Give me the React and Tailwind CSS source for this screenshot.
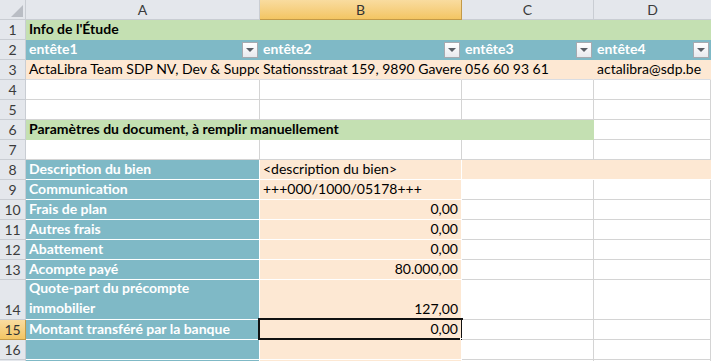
import React from "react"

const GREEN = "bg-[#c4e0b2]"
const TEAL = "bg-[#7fb9c6]"
const PEACH = "bg-[#fde8d3]"

function Dropdown() {
  return (
    <div className="absolute right-[1px] top-[2px] flex h-[16px] w-[16px] items-center justify-center border border-[#a6aab0] bg-gradient-to-b from-white to-[#e8eaee]">
      <svg width="8" height="5" viewBox="0 0 8 5">
        <path d="M0 0 L8 0 L4 4 Z" fill="#5a5f66" />
      </svg>
    </div>
  )
}

function Cell({ w, bg = "bg-white", border = "border-[#d4d4d4]", children, className = "", drop }) {
  return (
    <div
      className={`relative shrink-0 self-stretch border-r border-b ${bg} ${border} ${className}`}
      style={w ? { width: w } : { flex: 1 }}
    >
      {children}
      {drop && <Dropdown />}
    </div>
  )
}

function RowHead({ n, h = 20, selected }) {
  return (
    <div
      className={`flex w-[26px] shrink-0 items-end justify-center border-r border-b pb-[1px] text-[14px] leading-[16px] ${
        selected
          ? "border-[#c39a48] bg-gradient-to-b from-[#f9dc9f] to-[#f3c562] text-[#333]"
          : "border-[#c9cdd3] bg-[#e4e7ec] text-[#3b3b3b]"
      }`}
      style={{ height: h }}
    >
      {n}
    </div>
  )
}

function Row({ n, h = 20, selected, children }) {
  return (
    <div className="flex" style={{ height: h }}>
      <RowHead n={n} h={h} selected={selected} />
      {children}
    </div>
  )
}

const W = { A: 234, B: 202, C: 132 }

function Txt({ children, bold, white, right, className = "" }) {
  return (
    <div
      className={`absolute bottom-[1px] whitespace-nowrap text-[14px] leading-[18px] ${bold ? "font-bold" : ""} ${
        white ? "text-white" : "text-black"
      } ${right ? "right-[3px]" : "left-[3px]"} ${className}`}
    >
      {children}
    </div>
  )
}

export default function App() {
  return (
    <div
      className="h-[361px] w-[711px] overflow-hidden bg-white"
      style={{ fontFamily: "Lato, 'Open Sans', sans-serif" }}
    >
      {/* column headers */}
      <div className="flex h-[20px]">
        <div className="relative w-[26px] shrink-0 border-r border-b border-[#c9cdd3] bg-[#e4e7ec]">
          <svg className="absolute right-[2px] bottom-[2px]" width="12" height="12" viewBox="0 0 12 12">
            <path d="M12 0 L12 12 L0 12 Z" fill="#b9bdc4" />
          </svg>
        </div>
        <div className="flex w-[234px] shrink-0 items-center justify-center border-r border-b border-[#c9cdd3] bg-[#e4e7ec] text-[14px] text-[#3b3b3b]">
          A
        </div>
        <div className="flex w-[202px] shrink-0 items-center justify-center border-r border-b border-[#c39a48] bg-gradient-to-b from-[#f9dc9f] to-[#f3c562] text-[14px] text-[#333]">
          B
        </div>
        <div className="flex w-[132px] shrink-0 items-center justify-center border-r border-b border-[#c9cdd3] bg-[#e4e7ec] text-[14px] text-[#3b3b3b]">
          C
        </div>
        <div className="flex flex-1 items-center justify-center border-b border-[#c9cdd3] bg-[#e4e7ec] text-[14px] text-[#3b3b3b]">
          D
        </div>
      </div>

      {/* row 1 */}
      <Row n={1}>
        <div className={`relative flex-1 border-b border-[#c4e0b2] ${GREEN}`}>
          <Txt bold>Info de l'Étude</Txt>
        </div>
      </Row>

      {/* row 2 */}
      <Row n={2}>
        <Cell w={W.A} bg={TEAL} border="border-[#7fb9c6]" drop>
          <Txt bold white>entête1</Txt>
        </Cell>
        <Cell w={W.B} bg={TEAL} border="border-[#7fb9c6]" drop>
          <Txt bold white>entête2</Txt>
        </Cell>
        <Cell w={W.C} bg={TEAL} border="border-[#7fb9c6]" drop>
          <Txt bold white>entête3</Txt>
        </Cell>
        <Cell bg={TEAL} border="border-[#7fb9c6]" drop>
          <Txt bold white>entête4</Txt>
        </Cell>
      </Row>

      {/* row 3 */}
      <Row n={3}>
        <Cell w={W.A} bg={PEACH} border="border-[#fde8d3] border-b-[#d9dde3]" className="overflow-hidden">
          <Txt>ActaLibra Team SDP NV, Dev &amp; Support</Txt>
        </Cell>
        <Cell w={W.B} bg={PEACH} border="border-[#fde8d3] border-b-[#d9dde3]">
          <Txt>Stationsstraat 159, 9890 Gavere</Txt>
        </Cell>
        <Cell w={W.C} bg={PEACH} border="border-[#fde8d3] border-b-[#d9dde3]">
          <Txt>056 60 93 61</Txt>
        </Cell>
        <Cell bg={PEACH} border="border-[#fde8d3] border-b-[#d9dde3]">
          <Txt>actalibra@sdp.be</Txt>
        </Cell>
      </Row>

      {/* rows 4-5 */}
      {[4, 5].map((n) => (
        <Row key={n} n={n}>
          <Cell w={W.A} />
          <Cell w={W.B} />
          <Cell w={W.C} />
          <Cell />
        </Row>
      ))}

      {/* row 6 */}
      <Row n={6}>
        <div className={`relative w-[568px] shrink-0 border-r border-b border-[#c4e0b2] ${GREEN}`}>
          <Txt bold>Paramètres du document, à remplir manuellement</Txt>
        </div>
        <Cell />
      </Row>

      {/* row 7 */}
      <Row n={7}>
        <Cell w={W.A} />
        <Cell w={W.B} />
        <Cell w={W.C} />
        <Cell />
      </Row>

      {/* row 8 */}
      <Row n={8}>
        <Cell w={W.A} bg={TEAL} border="border-white">
          <Txt bold white>Description du bien</Txt>
        </Cell>
        <Cell w={W.B} bg={PEACH} border="border-white">
          <Txt>&lt;description du bien&gt;</Txt>
        </Cell>
        <div className={`relative flex-1 border-b border-white ${PEACH}`} />
      </Row>

      {[
        { n: 9, label: "Communication", value: "+++000/1000/05178+++", left: true },
        { n: 10, label: "Frais de plan", value: "0,00" },
        { n: 11, label: "Autres frais", value: "0,00" },
        { n: 12, label: "Abattement", value: "0,00" },
        { n: 13, label: "Acompte payé", value: "80.000,00" },
        { n: 14, label: "Quote-part du précompte", label2: "immobilier", value: "127,00", h: 40 },
        { n: 15, label: "Montant transféré par la banque", value: "0,00", selected: true },
        { n: 16, label: "", value: "" },
      ].map((r) => (
        <Row key={r.n} n={r.n} h={r.h || 20} selected={r.selected}>
          <Cell w={W.A} bg={TEAL} border="border-white">
            {r.label2 ? (
              <div className="absolute bottom-[1px] left-[3px] text-[14px] font-bold leading-[20px] text-white">
                <div>{r.label}</div>
                <div>{r.label2}</div>
              </div>
            ) : (
              <Txt bold white>{r.label}</Txt>
            )}
          </Cell>
          <Cell w={W.B} bg={PEACH} border="border-white">
            {r.value && (r.left ? <Txt>{r.value}</Txt> : <Txt right>{r.value}</Txt>)}
            {r.selected && (
              <>
                <div className="absolute left-[-2px] top-[-2px] right-[-2px] bottom-[-1px] border-2 border-[#111]" />
                <div className="absolute right-[-4px] bottom-[-4px] h-[5px] w-[5px] border border-white bg-[#111]" />
              </>
            )}
          </Cell>
          <Cell w={W.C} />
          <Cell />
        </Row>
      ))}
      <Row n="">
        <Cell w={W.A} bg={TEAL} border="border-white" />
        <Cell w={W.B} bg={PEACH} border="border-white" />
        <Cell w={W.C} />
        <Cell />
      </Row>
    </div>
  )
}
